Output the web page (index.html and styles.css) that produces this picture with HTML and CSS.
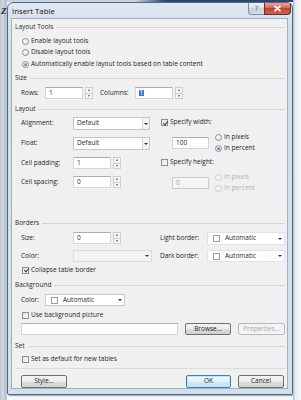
FILE: index.html
```html
<!DOCTYPE html>
<html>
<head>
<meta charset="utf-8">
<title>Insert Table</title>
<link rel="stylesheet" href="styles.css">
</head>
<body>
<div class="screen">
  <div class="behind"><span class="behind-z">Z</span></div>
  <div class="window">
    <div class="titlebar">
      <span class="title">Insert Table</span>
      <div class="caption">
        <span class="cap-help">?</span>
        <span class="cap-close"><svg width="9" height="7" viewBox="0 0 9 7"><path d="M1.5 0.8 L7.5 6.2 M7.5 0.8 L1.5 6.2" stroke="#fff" stroke-width="1.8" fill="none"/></svg></span>
      </div>
    </div>
    <div class="client">
      <div class="ghead"><span>Layout Tools</span></div>
      <div class="opt opt-first"><span class="radio"></span><span class="lbl">Enable layout tools</span></div>
      <div class="opt"><span class="radio"></span><span class="lbl">Disable layout tools</span></div>
      <div class="opt opt-tall"><span class="radio on"></span><span class="lbl">Automatically enable layout tools based on table content</span></div>

      <div class="ghead gh-size"><span>Size</span></div>
      <div class="row rows-row">
        <span class="lab lab-rows">Rows:</span>
        <span class="tb tb-rows">1</span>
        <span class="spin"><span class="up"></span><span class="dn"></span></span>
        <span class="lab lab-cols">Columns:</span>
        <span class="tb tb-rows"><span class="sel">1</span></span>
        <span class="spin"><span class="up"></span><span class="dn"></span></span>
      </div>

      <div class="ghead gh-layout"><span>Layout</span></div>
      <div class="layout">
        <div class="lcol">
          <div class="row h13"><span class="lab lab-w">Alignment:</span><span class="dd dd-w"><span class="ddt">Default</span><span class="dda"></span></span></div>
          <div class="row h13 mt7"><span class="lab lab-w">Float:</span><span class="dd dd-w"><span class="ddt">Default</span><span class="dda"></span></span></div>
          <div class="row h12 mt7"><span class="lab lab-w">Cell padding:</span><span class="tb tb-s">1</span><span class="spin"><span class="up"></span><span class="dn"></span></span></div>
          <div class="row h12 mt7"><span class="lab lab-w">Cell spacing:</span><span class="tb tb-s">0</span><span class="spin"><span class="up"></span><span class="dn"></span></span></div>
        </div>
        <div class="rcol">
          <div class="chkrow"><span class="chk on"></span><span class="lbl">Specify width:</span></div>
          <div class="dimrow">
            <span class="tb tb-dim">100</span>
            <div class="units">
              <div class="unit"><span class="radio"></span><span class="lbl">In pixels</span></div>
              <div class="unit"><span class="radio on"></span><span class="lbl">In percent</span></div>
            </div>
          </div>
          <div class="chkrow chkrow-2"><span class="chk"></span><span class="lbl">Specify height:</span></div>
          <div class="dimrow">
            <span class="tb tb-dim off">0</span>
            <div class="units off">
              <div class="unit"><span class="radio dis"></span><span class="lbl">In pixels</span></div>
              <div class="unit"><span class="radio dis"></span><span class="lbl">In percent</span></div>
            </div>
          </div>
        </div>
      </div>

      <div class="ghead gh-borders"><span>Borders</span></div>
      <div class="borders">
        <div class="lcol">
          <div class="row h12"><span class="lab lab-w">Size:</span><span class="tb tb-s">0</span><span class="spin"><span class="up"></span><span class="dn"></span></span></div>
          <div class="row h12 mt6"><span class="lab lab-w">Color:</span><span class="dd dd-c off"><span class="ddt"></span><span class="dda plain"></span></span></div>
          <div class="opt opt-collapse"><span class="chk on"></span><span class="lbl">Collapse table border</span></div>
        </div>
        <div class="bcol">
          <div class="row h13"><span class="lab lab-b">Light border:</span><span class="dd dd-b"><span class="sw"></span><span class="ddt">Automatic</span><span class="dda plain"></span></span></div>
          <div class="row h12 mt5"><span class="lab lab-b">Dark border:</span><span class="dd dd-b"><span class="sw"></span><span class="ddt">Automatic</span><span class="dda plain"></span></span></div>
        </div>
      </div>

      <div class="ghead gh-bg"><span>Background</span></div>
      <div class="row h12 mt4 indent"><span class="lab lab-rows">Color:</span><span class="dd dd-bg"><span class="sw"></span><span class="ddt">Automatic</span><span class="dda plain"></span></span></div>
      <div class="opt opt-usebg"><span class="chk"></span><span class="lbl">Use background picture</span></div>
      <div class="row h12 mt3 indent">
        <span class="tb tb-path"></span>
        <span class="btn btn-browse">Browse...</span>
        <span class="btn btn-props dis">Properties...</span>
      </div>

      <div class="ghead gh-set"><span>Set</span></div>
      <div class="opt opt-set"><span class="chk"></span><span class="lbl">Set as default for new tables</span></div>
      <div class="sep"></div>
      <div class="row btnrow indent">
        <span class="btn btn-style">Style...</span>
        <span class="btn btn-ok">OK</span>
        <span class="btn btn-cancel">Cancel</span>
      </div>
    </div>
  </div>
  <div class="after"></div>
</div>
</body>
</html>
```

FILE: styles.css
```css
* { box-sizing: border-box; margin: 0; padding: 0; }
html, body { width: 301px; height: 400px; overflow: hidden; }
body {
  background: #f4f6f8;
  font-family: "Open Sans", "Noto Sans", sans-serif;
  font-size: 6.5px;
  line-height: 1;
  color: #1f1f1f;
}
.screen {
  display: flex;
  height: 400px;
  background: linear-gradient(to right, #c9d1dc 0, #c9d1dc 45%, #2e4470 55%, #2e4470 100%) top / 100% 2px no-repeat, #f4f6f8;
}
.behind {
  width: 7px;
  height: 400px;
  background: linear-gradient(to right, #bcc3cc 0, #d6dbe1 3px, #c3c9d1 4px, #b9c0c9 7px);
  position: relative;
  overflow: hidden;
}
.behind-z {
  position: absolute;
  left: 1px;
  top: 7px;
  font-family: "Liberation Serif", serif;
  font-style: italic;
  font-weight: bold;
  font-size: 9px;
  color: #222;
}
.after {
  flex: 1;
  background: linear-gradient(to right, #9fb3cc 0, #e6ebf1 2px, #f6f7f9 6px);
}
.window {
  margin-top: 2px;
  width: 286px;
  height: 393px;
  border: 1px solid #4f6a91;
  border-radius: 6px 6px 2px 2px;
  background: linear-gradient(#dfe7f0, #d2dde9 40px, #d5dfea);
  display: flex;
  flex-direction: column;
  box-shadow: 1px 1px 1px rgba(50, 90, 150, 0.5);
}
.titlebar {
  height: 17px;
  display: flex;
  align-items: flex-start;
  padding-left: 4px;
}
.title {
  font-size: 7.8px;
  margin-top: 5px;
  color: #111;
}
.caption {
  margin-left: auto;
  margin-right: 1px;
  display: flex;
  height: 12px;
}
.cap-help {
  width: 16px;
  height: 12px;
  border: 1px solid #7d8ea6;
  border-top: none;
  border-right: none;
  border-radius: 0 0 0 4px;
  background: linear-gradient(#eef2f6, #d8e0e9 50%, #c7d2de 50%, #d3dce6);
  color: #4c5968;
  font-size: 7px;
  display: flex;
  align-items: center;
  justify-content: center;
}
.cap-close {
  width: 27px;
  height: 12px;
  border: 1px solid #6e2c25;
  border-top: none;
  border-radius: 0 0 4px 0;
  background: linear-gradient(#e6a697, #d06a57 45%, #c2432f 50%, #cf6250);
  display: flex;
  align-items: center;
  justify-content: center;
}
.client {
  flex: 1;
  margin: 0 4px 5px 3px;
  border: 1px solid #9fb0c4;
  background: #f0f0f0;
  padding: 3px 2px 0 3px;
  display: flex;
  flex-direction: column;
}

/* group headers */
.ghead {
  height: 10px;
  display: flex;
  align-items: center;
  color: #2a2a2a;
}
.ghead::after {
  content: "";
  flex: 1;
  height: 1px;
  margin-left: 3px;
  background: #dcd3c9;
}
.gh-size { margin-top: 3px; }
.gh-layout { margin-top: 5px; }
.gh-borders { margin-top: 24px; }
.gh-bg { margin-top: 5px; }
.gh-set { margin-top: 6px; }

/* option rows (radio / checkbox) */
.opt {
  height: 11px;
  display: flex;
  align-items: center;
  padding-left: 7px;
}
.opt-first { margin-top: 4px; }
.opt-tall { height: 12px; }
.opt-collapse { margin-top: 3px; height: 10px; }
.opt-usebg { margin-top: 4px; height: 10px; }
.opt-set { margin-top: 3px; height: 10px; }
.lbl { margin-left: 2px; white-space: nowrap; }

.radio {
  width: 7px;
  height: 7px;
  border-radius: 50%;
  border: 1px solid #8b8f95;
  background: radial-gradient(circle at 40% 40%, #ffffff, #d8dbe0);
  display: flex;
  align-items: center;
  justify-content: center;
  flex: none;
}
.radio.on::after {
  content: "";
  width: 3px;
  height: 3px;
  border-radius: 50%;
  background: radial-gradient(circle at 35% 35%, #7fb6ea, #1f5ea8);
}
.radio.dis { border-color: #c9ccd0; background: #f3f3f3; }

.chk {
  width: 7px;
  height: 7px;
  border: 1px solid #8b8f95;
  background: linear-gradient(135deg, #e3e5e8, #fbfbfb);
  flex: none;
  position: relative;
}
.chk.on::after {
  content: "";
  position: absolute;
  left: 1.5px;
  top: -0.5px;
  width: 2px;
  height: 4px;
  border-right: 1.2px solid #2c3f78;
  border-bottom: 1.2px solid #2c3f78;
  transform: rotate(40deg);
}

/* generic rows */
.row {
  display: flex;
  align-items: center;
  height: 12px;
}
.h12 { height: 12px; }
.h13 { height: 13px; }
.mt3 { margin-top: 3px; }
.mt4 { margin-top: 4px; }
.mt5 { margin-top: 5px; }
.mt6 { margin-top: 6px; }
.mt7 { margin-top: 7px; }
.indent { padding-left: 6px; }

.rows-row { margin-top: 4px; padding-left: 6px; }
.lab { white-space: nowrap; flex: none; }
.lab-rows { width: 24px; }
.lab-cols { width: 35px; margin-left: 7px; }
.lab-w { width: 52px; }
.lab-b { width: 47px; }

/* text boxes */
.tb {
  height: 12px;
  background: #fff;
  border: 1px solid #d2d6dc;
  border-top-color: #a9aeb5;
  padding-left: 3px;
  display: flex;
  align-items: center;
  flex: none;
}
.tb-rows { width: 38px; }
.tb-s { width: 38px; }
.tb-dim { width: 37px; margin-top: 5px; }
.tb-path { width: 157px; }
.tb.off { background: #f4f4f4; color: #a4a4a4; border-color: #c9cdd2; }
.sel { background: #3a78c4; color: #fff; padding: 0 0.5px; }

.spin {
  display: flex;
  flex-direction: column;
  width: 8px;
  height: 12px;
  margin-left: 2px;
  flex: none;
}
.spin span {
  flex: 1;
  border: 1px solid #cbd0d6;
  background: #f6f6f6;
  display: flex;
  align-items: center;
  justify-content: center;
}
.spin .up { border-bottom: none; }
.spin .up::after {
  content: "";
  border-left: 1.5px solid transparent;
  border-right: 1.5px solid transparent;
  border-bottom: 2px solid #5a5a5a;
}
.spin .dn::after {
  content: "";
  border-left: 1.5px solid transparent;
  border-right: 1.5px solid transparent;
  border-top: 2px solid #5a5a5a;
}

/* dropdowns */
.dd {
  height: 13px;
  display: flex;
  align-items: center;
  background: #fff;
  border: 1px solid #c3c7cd;
  flex: none;
}
.row.h12 .dd { height: 12px; }
.ddt { flex: 1; padding-left: 3px; white-space: nowrap; }
.dda {
  width: 7px;
  height: 100%;
  border-left: 1px solid #d3d6da;
  background: #f3f3f3;
  display: flex;
  align-items: center;
  justify-content: center;
}
.dda::after {
  content: "";
  border-left: 2px solid transparent;
  border-right: 2px solid transparent;
  border-top: 2.5px solid #333;
}
.dda.plain { border-left: none; background: transparent; width: 9px; }
.dd-w { width: 77px; }
.dd-c { width: 79px; }
.dd.off { background: #f2f2f2; border-color: #dcdcdc; }
.dd-b { width: 78px; border-color: #e0e2e5; }
.dd-bg { width: 80px; border-color: #c8ccd1; }
.sw {
  width: 7px;
  height: 7px;
  border: 1px solid #9a9ea4;
  background: #fff;
  margin-left: 5px;
  flex: none;
}
.dd-b .ddt, .dd-bg .ddt { padding-left: 5px; }

/* layout section */
.layout {
  display: flex;
  margin-top: 3px;
  padding-left: 6px;
}
.lcol { width: 139px; display: flex; flex-direction: column; }
.rcol { display: flex; flex-direction: column; }
.chkrow {
  height: 11px;
  display: flex;
  align-items: center;
  padding-left: 1px;
}
.chkrow-2 { margin-top: 3px; }
.dimrow {
  display: flex;
  align-items: flex-start;
  padding-left: 12px;
  margin-top: 4px;
}
.units { margin-left: 6px; display: flex; flex-direction: column; }
.unit { height: 11px; display: flex; align-items: center; }
.units.off .lbl { color: #b2b2b2; }

/* borders section */
.borders {
  display: flex;
  margin-top: 4px;
  padding-left: 6px;
}
.borders .opt-collapse { padding-left: 1px; }
.bcol { display: flex; flex-direction: column; }

/* buttons */
.btn {
  height: 12px;
  border: 1px solid #707070;
  border-radius: 2px;
  background: linear-gradient(#f3f3f3, #ececec 50%, #dedede 50%, #d0d0d0);
  display: flex;
  align-items: center;
  justify-content: center;
  flex: none;
  white-space: nowrap;
  color: #1a1a1a;
}
.btn-browse { width: 46px; margin-left: 7px; }
.btn-props { width: 47px; margin-left: 7px; }
.btn.dis { border-color: #b5b9bd; background: #f4f4f4; color: #a8a8a8; }

.sep {
  height: 1px;
  margin-top: 4px;
  background: #e0dbd6;
}
.btnrow { margin-top: 6px; height: 13px; }
.btnrow .btn { height: 13px; }
.btn-style { width: 46px; }
.btn-ok {
  width: 45px;
  margin-left: auto;
  border-color: #3c7fb1;
  background: linear-gradient(#f2f9fd, #e3f2fb 50%, #d2eaf8 50%, #c4e3f6);
  box-shadow: inset 0 0 0 1px #bfe4f9;
}
.btn-cancel { width: 46px; margin-left: 7px; margin-right: 1px; }
```
